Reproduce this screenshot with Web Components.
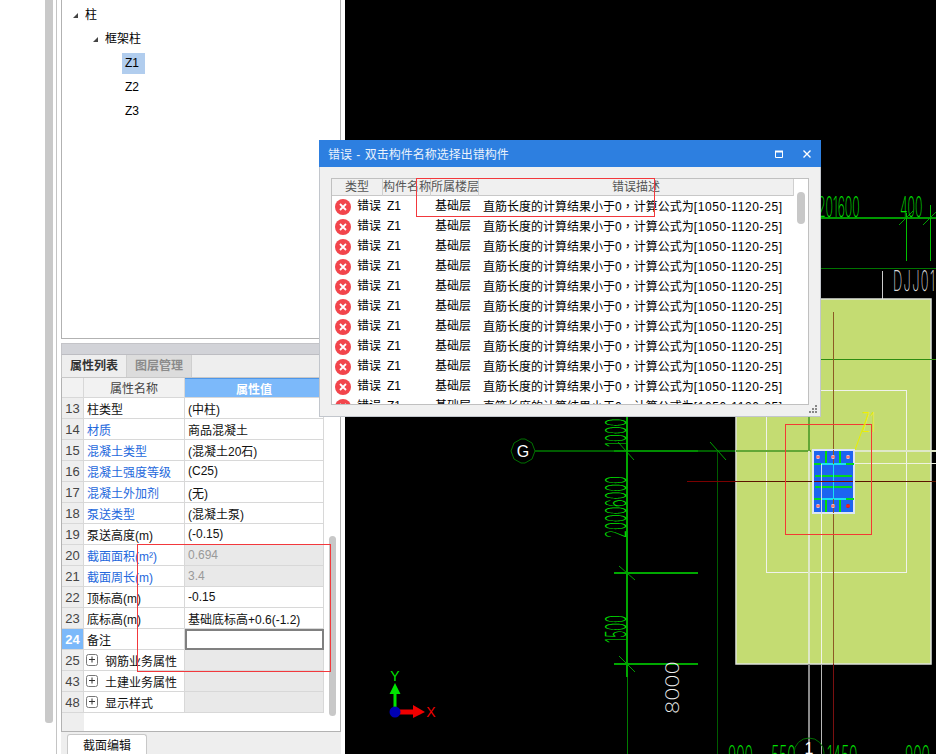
<!DOCTYPE html>
<html lang="zh-CN">
<head>
<meta charset="utf-8">
<title>错误 - 双击构件名称选择出错构件</title>
<style>
  html, body { margin: 0; padding: 0; background: #fff; }
  body { font: 12px "Liberation Sans", "Noto Sans CJK SC", sans-serif; color: #000; }
</style>
</head>
<body>
<app-shell>
  <side-rail></side-rail>
  <left-panel>
    <tree-panel></tree-panel>
    <prop-panel></prop-panel>
  </left-panel>
  <cad-view></cad-view>
  <error-dialog></error-dialog>
  <mark-box x="137" y="544" w="194" h="128"></mark-box>
  <mark-box x="416" y="178" w="239" h="39"></mark-box>
</app-shell>

<script>
// ===== shell =====
class AppShell extends HTMLElement {
  constructor() {
    super();
    this.attachShadow({ mode: 'open' });
    this.shadowRoot.innerHTML = `
      <style>
        :host {
          display: flex;
          position: relative;
          width: 936px;
          height: 754px;
          overflow: hidden;
          background: #fff;
        }
      </style>
      <slot></slot>
    `;
  }
}

class SideRail extends HTMLElement {
  constructor() {
    super();
    this.attachShadow({ mode: 'open' });
    this.shadowRoot.innerHTML = `
      <style>
        :host {
          display: flex;
          flex: none;
          width: 61px;
          height: 100%;
          padding-left: 45px;
          box-sizing: border-box;
        }
        .thumb { width: 8px; height: 723px; background: #c9c9c9; border-radius: 0 0 3px 3px; }
        .line { width: 1px; margin-left: 3px; background: #c4c4c4; }
      </style>
      <div class="thumb"></div>
      <div class="line"></div>
    `;
  }
}

class LeftPanel extends HTMLElement {
  constructor() {
    super();
    this.attachShadow({ mode: 'open' });
    this.shadowRoot.innerHTML = `
      <style>
        :host {
          display: flex;
          flex-direction: column;
          flex: none;
          width: 280px;
          height: 100%;
          margin-right: 4px;
        }
      </style>
      <slot></slot>
    `;
  }
}

// ===== tree =====
class TreePanel extends HTMLElement {
  constructor() {
    super();
    this.attachShadow({ mode: 'open' });
  }

  getNodes() {
    return [
      { label: '柱', indent: 10, open: true },
      { label: '框架柱', indent: 30, open: true },
      { label: 'Z1', indent: 60, selected: true },
      { label: 'Z2', indent: 60 },
      { label: 'Z3', indent: 60 }
    ];
  }

  connectedCallback() {
    const arrow = `<svg width="7" height="7" viewBox="0 0 7 7"><path d="M6 1V6H1Z" fill="#444"/></svg>`;
    this.shadowRoot.innerHTML = `
      <style>
        :host {
          display: block;
          flex: none;
          height: 335px;
          padding-top: 3px;
          margin-bottom: 4px;
          box-sizing: content-box;
          border: 1px solid #b2b2b2;
          border-top: 0;
        }
        .node { display: flex; align-items: center; height: 24px; }
        .arrow { display: flex; width: 13px; flex: none; }
        .label { padding: 0 6px 0 3px; line-height: 21px; height: 21px; }
        .parent { padding: 0; }
        .selected { background: #b1cdee; }
      </style>
      ${this.getNodes().map(n => `
        <div class="node" style="padding-left:${n.indent}px">
          ${n.open ? `<span class="arrow">${arrow}</span>` : ''}
          <span class="label ${n.open ? 'parent' : ''} ${n.selected ? 'selected' : ''}">${n.label}</span>
        </div>
      `).join('')}
    `;
  }
}

// ===== properties =====
class PropPanel extends HTMLElement {
  constructor() {
    super();
    this.attachShadow({ mode: 'open' });
  }

  getRows() {
    return [
      { n: 13, name: '柱类型', value: '(中柱)' },
      { n: 14, name: '材质', value: '商品混凝土', link: true },
      { n: 15, name: '混凝土类型', value: '(混凝土20石)', link: true },
      { n: 16, name: '混凝土强度等级', value: '(C25)', link: true },
      { n: 17, name: '混凝土外加剂', value: '(无)', link: true },
      { n: 18, name: '泵送类型', value: '(混凝土泵)', link: true },
      { n: 19, name: '泵送高度(m)', value: '(-0.15)' },
      { n: 20, name: '截面面积(m²)', value: '0.694', link: true, off: true },
      { n: 21, name: '截面周长(m)', value: '3.4', link: true, off: true },
      { n: 22, name: '顶标高(m)', value: '-0.15' },
      { n: 23, name: '底标高(m)', value: '基础底标高+0.6(-1.2)' },
      { n: 24, name: '备注', value: '', current: true },
      { n: 25, name: '钢筋业务属性', value: '', group: true, off: true },
      { n: 43, name: '土建业务属性', value: '', group: true, off: true },
      { n: 48, name: '显示样式', value: '', group: true, off: true }
    ];
  }

  connectedCallback() {
    const plus = `<svg class="plus" width="12" height="12" viewBox="0 0 12 12">
      <rect x=".5" y=".5" width="11" height="11" rx="2" fill="#fff" stroke="#777"/>
      <path d="M3 5.5H9M6 2.5V8.5" stroke="#333"/></svg>`;
    this.shadowRoot.innerHTML = `
      <style>
        :host {
          display: flex;
          flex-direction: column;
          flex: 1;
          min-height: 0;
          color: #111;
        }
        .strip { height: 10px; flex: none; background: #d2d3d8; border: 1px solid #c4c4c8; border-bottom-color: #bdbdc2; border-right: 0; }
        .tabs {
          display: flex;
          flex: none;
          height: 22px;
          background: #eee;
          border-left: 1px solid #c4c4c4;
          border-right: 1px solid #b2b2b2;
          border-bottom: 1px solid #c8c8c8;
        }
        .tab {
          width: 64px;
          text-align: center;
          line-height: 23px;
          font-weight: bold;
          color: #333;
          border-right: 1px solid #cfcfcf;
        }
        .tab.off { background: #dcdcdc; color: #8b8b8b; }
        .body {
          display: flex;
          flex: 1;
          min-height: 0;
          background: #fff;
          border: 1px solid #b2b2b2;
          border-width: 0 1px 1px 1px;
        }
        .grid {
          display: grid;
          grid-template-columns: 22px 101px 139px;
          grid-template-rows: 20px;
          grid-auto-rows: 21px;
          align-content: start;
          flex: none;
          width: 262px;
          background: linear-gradient(to right, #eee 22px, #fff 22px);
        }
        .cell {
          display: flex;
          align-items: center;
          padding-left: 3px;
          white-space: nowrap;
          box-sizing: border-box;
          border-right: 1px solid #d8d8d8;
          border-bottom: 1px solid #d8d8d8;
        }
        .num { justify-content: center; padding: 0; background: #eee; color: #444; font-size: 13px; }
        .num.current { background: #7cb9fa; color: #fff; font-weight: bold; }
        .head { justify-content: center; padding: 0; background: #f2f2f2; color: #444; }
        .head.val { background: #7cb9fa; color: #fff; font-weight: bold; border-top: 1px solid #4d96e8; }
        .link { color: #2468dc; }
        .off { background: #e9e9e9; color: #999; }
        .edit { border: 2px solid #808080; }
        .plus { margin: 0 7px 0 -1px; flex: none; }
        .track { flex: 1; position: relative; }
        .track .bar { margin: 158px 0 0 5px; width: 7px; height: 180px; background: #c8c8c8; border-radius: 4px; }
        .foot { flex: none; height: 22px; background: #eee; padding-left: 6px; display: flex; align-items: flex-end; }
        .foot span {
          width: 78px;
          height: 19px;
          text-align: center;
          line-height: 22px;
          background: #fff;
          border: 1px solid #c8c8c8;
          border-bottom: 0;
          border-radius: 3px 3px 0 0;
        }
      </style>
      <div class="strip"></div>
      <div class="tabs">
        <div class="tab">属性列表</div>
        <div class="tab off">图层管理</div>
      </div>
      <div class="body">
        <div class="grid">
          <div class="cell head"></div>
          <div class="cell head">属性名称</div>
          <div class="cell head val">属性值</div>
          ${this.getRows().map(r => `
            <div class="cell num ${r.current ? 'current' : ''}">${r.n}</div>
            <div class="cell ${r.link ? 'link' : ''}">${r.group ? plus : ''}${r.name}</div>
            <div class="cell ${r.off ? 'off' : ''} ${r.current ? 'edit' : ''}">${r.value}</div>
          `).join('')}
        </div>
        <div class="track"><div class="bar"></div></div>
      </div>
      <div class="foot"><span>截面编辑</span></div>
    `;
  }
}

// ===== error dialog =====
class ErrorDialog extends HTMLElement {
  constructor() {
    super();
    this.attachShadow({ mode: 'open' });
  }

  connectedCallback() {
    const icon = `<svg width="16" height="16" viewBox="0 0 16 16">
      <circle cx="8" cy="8" r="8" fill="#f2454c"/>
      <path d="M5 5L11 11M11 5L5 11" stroke="#fff" stroke-width="1.8"/></svg>`;
    const row = `
      <div class="row">
        <span class="ico">${icon}</span><span>错误</span><span>Z1</span><span>基础层</span>
        <span>直筋长度的计算结果小于0<span class="c" lang="zh-TW">，</span>计算公式为<span class="f">[1050-1120-25]</span></span>
      </div>`;
    this.shadowRoot.innerHTML = `
      <style>
        :host {
          position: absolute;
          left: 319px;
          top: 140px;
          width: 502px;
          height: 277px;
          box-sizing: border-box;
          display: flex;
          flex-direction: column;
          background: #f0f0f0;
          border: 1px solid #c2c6cc;
          border-top: 0;
        }
        .title {
          display: flex;
          align-items: center;
          flex: none;
          height: 27px;
          margin: 0 -1px;
          padding: 0 10px 0 9px;
          background: #2d7fe0;
          color: #eaf2fc;
        }
        .title span { flex: 1; word-spacing: 1px; }
        .title svg { display: block; margin-left: 20px; }
        .list {
          position: relative;
          flex: none;
          width: 478px;
          height: 227px;
          margin: 11px 0 0 11px;
          box-sizing: border-box;
          background: #fff;
          border: 1px solid #c0c0c0;
          overflow: hidden;
        }
        .head, .row {
          display: grid;
          grid-template-columns: 25px 30px 48px 48px 1fr;
          white-space: nowrap;
        }
        .head {
          grid-template-columns: 51px 48px 48px 315px;
          height: 16px;
          line-height: 17px;
          background: #f0f0f0;
          color: #555;
          border-bottom: 1px solid #c8c8c8;
          width: 462px;
        }
        .head span { text-align: center; border-right: 1px solid #d0d0d0; }
        .row { height: 20px; line-height: 20px; }
        .row span { line-height: 20px; }
        .ico { display: flex; align-items: center; padding-left: 3px; }
        .c { font-family: "Noto Sans CJK TC", sans-serif; }
        .f { letter-spacing: .6px; }
        .thumb {
          position: absolute;
          left: 465px;
          top: 13px;
          width: 8px;
          height: 32px;
          background: #c8c8c8;
          border-radius: 4px;
        }
        .grip {
          position: absolute;
          right: 3px;
          bottom: 3px;
          display: block;
        }
      </style>
      <div class="title">
        <span>错误 - 双击构件名称选择出错构件</span>
        <svg width="8" height="8" viewBox="0 0 8 8"><path d="M.5 1.5H7.5V7.5H.5Z" fill="none" stroke="#fff"/><path d="M0 1.5H8" stroke="#fff" stroke-width="2"/></svg>
        <svg width="8" height="8" viewBox="0 0 8 8"><path d="M.5 .5L7.5 7.5M7.5 .5L.5 7.5" stroke="#fff" stroke-width="1.4"/></svg>
      </div>
      <div class="list">
        <div class="head"><span>类型</span><span>构件名称</span><span>所属楼层</span><span>错误描述</span></div>
        ${Array(11).fill(row).join('')}
        <div class="thumb"></div>
      </div>
      <svg class="grip" width="8" height="8" viewBox="0 0 8 8" fill="#888">
        <rect x="6" y="0" width="2" height="2"/><rect x="3" y="3" width="2" height="2"/><rect x="6" y="3" width="2" height="2"/>
        <rect x="0" y="6" width="2" height="2"/><rect x="3" y="6" width="2" height="2"/><rect x="6" y="6" width="2" height="2"/>
      </svg>
    `;
  }
}

// ===== annotation rectangle =====
class MarkBox extends HTMLElement {
  constructor() {
    super();
    this.attachShadow({ mode: 'open' });
  }

  connectedCallback() {
    const [x, y, w, h] = ['x', 'y', 'w', 'h'].map(a => this.getAttribute(a));
    this.shadowRoot.innerHTML = `
      <style>
        :host {
          position: absolute;
          left: ${x}px;
          top: ${y}px;
          width: ${w}px;
          height: ${h}px;
          box-sizing: border-box;
          border: 1px solid #f2383c;
          pointer-events: none;
        }
      </style>
    `;
  }
}

// ===== drawing =====
class CadView extends HTMLElement {
  constructor() {
    super();
    this.attachShadow({ mode: 'open' });
  }

  // thin tall digits, the way the drawing engine prints them
  label(text, x, y, color, opts = {}) {
    const turn = opts.rotate ? 'rotate(-90)' : '';
    const sx = opts.sx || 0.46;
    const sy = opts.sy || 1;
    const extra = opts.style ? `style="${opts.style}"` : '';
    return `<text transform="translate(${x} ${y}) ${turn} scale(${sx} ${sy})" fill="${color}" ${extra}>${text}</text>`;
  }

  connectedCallback() {
    const bright = '#00a800';
    const dark = '#005c00';
    const green = '#00e000';
    const dots = [[818, 457], [833, 457], [848, 457], [818, 506], [833, 506], [848, 506]];
    this.shadowRoot.innerHTML = `
      <style>
        :host { display: block; flex: 1; height: 100%; background: #000; }
        svg { display: block; }
        text { font: 200 28px Inter, "Liberation Sans", sans-serif; }
        .s { shape-rendering: crispEdges; }
      </style>
      <svg width="591" height="754" viewBox="345 0 591 754">
        <g class="s" fill="none">
          <path d="M821 218H936" stroke="#009800" stroke-width="2"/>
          <path d="M821 268H936" stroke="#007400"/>
          <path d="M906 213V261M930 205V261" stroke="#00c000"/>
          <path d="M882 271V317" stroke="#ccc"/>
          <path d="M535 451H736" stroke="${dark}" stroke-width="2"/>
          <path d="M614 451H698" stroke="#008c00" stroke-width="2"/>
          <path d="M614 573H698M614 664H698" stroke="${bright}" stroke-width="2"/>
          <path d="M627 417V677" stroke="${bright}" stroke-width="2"/>
          <path d="M627 677V754" stroke="#007c00"/>
          <path d="M717 451V754" stroke="${dark}"/>
        </g>
        <path d="M899 225L913 211M923 225L937 211M618 442L634 460M619 566L635 580M619 656L635 672M710 442L726 460" stroke="#00a000"/>

        <rect x="736" y="299" width="195" height="365" fill="#c4dc72" stroke="#e0e4dc" stroke-width="1.5"/>
        <g class="s" fill="none">
          <path d="M821 359H936" stroke="#2e8c10"/>
          <path d="M766.5 390.5H906.5V572.5H766.5Z" stroke="#f0f2ec" stroke-width="1.5"/>
          <path d="M736 451H811M809 417V452" stroke="#62a736" stroke-width="2"/>
          <path d="M809 451V664" stroke="#dfe8c8" stroke-width="2"/>
          <path d="M821 463V664" stroke="#f2f4e8"/>
          <path d="M854 451H936" stroke="#dfe8c8" stroke-width="2"/>
          <path d="M854 463H936" stroke="#eef2e0"/>
          <path d="M809 664V754" stroke="#8a8a8a" stroke-width="2"/>
          <path d="M821 664V754" stroke="#b8b8b8"/>
          <path d="M833 312V664" stroke="#8c5a24"/>
          <path d="M833 664V754" stroke="#7a1010"/>
          <path d="M687 481H736" stroke="#7a0000"/>
          <path d="M736 481H936" stroke="#5c1500"/>
          <path d="M785.5 424.5H871.5V534.5H785.5Z" stroke="#f23a34"/>
        </g>
        <path d="M855 450L868 414" stroke="#e8f000"/>
        ${this.label('Z1', 862, 432, '#f0f000', { sy: 0.95 })}

        <g class="s">
          <rect x="813" y="450" width="41" height="63" fill="#1c64f0" stroke="#dde6f4" stroke-width="1.5"/>
          <path d="M826 451V463M840 451V463M826 500V512M840 500V512" stroke="#00e000" stroke-width="2"/>
          <path d="M814 464H823M844 464H854M814 499H823M844 499H854M815 476H852M815 487H852" stroke="#00d820" stroke-width="2"/>
          <path d="M821 464H846M821 499H846" stroke="#18e0f0" stroke-width="2"/>
          <path d="M833 464V499" stroke="#18e0f0"/>
          <path d="M821 464V513" stroke="#cfdcf0"/>
          <path d="M833 450V464M833 499V513" stroke="#8c5a24"/>
          <path d="M814 481H853" stroke="#7a0000"/>
        </g>
        ${dots.map(([x, y], i) => `
          <circle cx="${x}" cy="${y}" r="2" fill="${i === 5 ? '#f01010' : '#ffc8c8'}"/>
          <path d="M${x - 2} ${y}H${x + 2}" stroke="#f03030"/>
        `).join('')}

        ${this.label('20', 818, 217, green, { sx: 0.44 })}
        ${this.label('1600', 833, 217, green, { sx: 0.44 })}
        ${this.label('400', 900, 217, green, { sx: 0.44 })}
        ${this.label('DJJ01', 893, 291, '#d8d8d8', { style: 'letter-spacing:3px' })}
        ${this.label('1000', 626, 447, green, { rotate: true })}
        ${this.label('6000', 626, 507, green, { rotate: true })}
        ${this.label('2000', 626, 538, green, { rotate: true })}
        ${this.label('1500', 626, 643, green, { rotate: true })}
        ${this.label('8000', 679, 714, '#f0f0f0', { rotate: true, sx: 0.78, sy: 0.66 })}
        ${this.label('900', 728, 766, green, { sx: 0.5 })}
        ${this.label('550', 771, 766, green, { sx: 0.5 })}
        ${this.label('1450', 827, 766, green, { sx: 0.5 })}
        ${this.label('900', 905, 766, green, { sx: 0.5 })}

        <path d="M535 451L532 443L525 439H521L514 443L511 451L514 459L521 463H525L532 459Z" fill="#000" stroke="#007000"/>
        <text x="523" y="457" text-anchor="middle" fill="#fff" style="font:400 16px 'Liberation Sans',sans-serif">G</text>
        <circle cx="809" cy="753" r="15" fill="none" stroke="#007000"/>
        <text x="809" y="754" text-anchor="middle" fill="#fff" style="font:400 16px 'Liberation Sans',sans-serif">1</text>

        <path d="M393.5 712V694H389.5L395 683L400.5 694H396.5V712Z" fill="#00e400"/>
        <path d="M395 709.5H413V705L425 712L413 718V714.5H395Z" fill="#f00000"/>
        <circle cx="395" cy="712" r="5.5" fill="#0000b4"/>
        <text x="395" y="681" text-anchor="middle" fill="#00e400" style="font:400 14px 'Liberation Sans',sans-serif">Y</text>
        <text x="431" y="717" text-anchor="middle" fill="#f00000" style="font:400 14px 'Liberation Sans',sans-serif">X</text>
      </svg>
    `;
  }
}

customElements.define('app-shell', AppShell);
customElements.define('side-rail', SideRail);
customElements.define('left-panel', LeftPanel);
customElements.define('tree-panel', TreePanel);
customElements.define('prop-panel', PropPanel);
customElements.define('error-dialog', ErrorDialog);
customElements.define('mark-box', MarkBox);
customElements.define('cad-view', CadView);
</script>
</body>
</html>
